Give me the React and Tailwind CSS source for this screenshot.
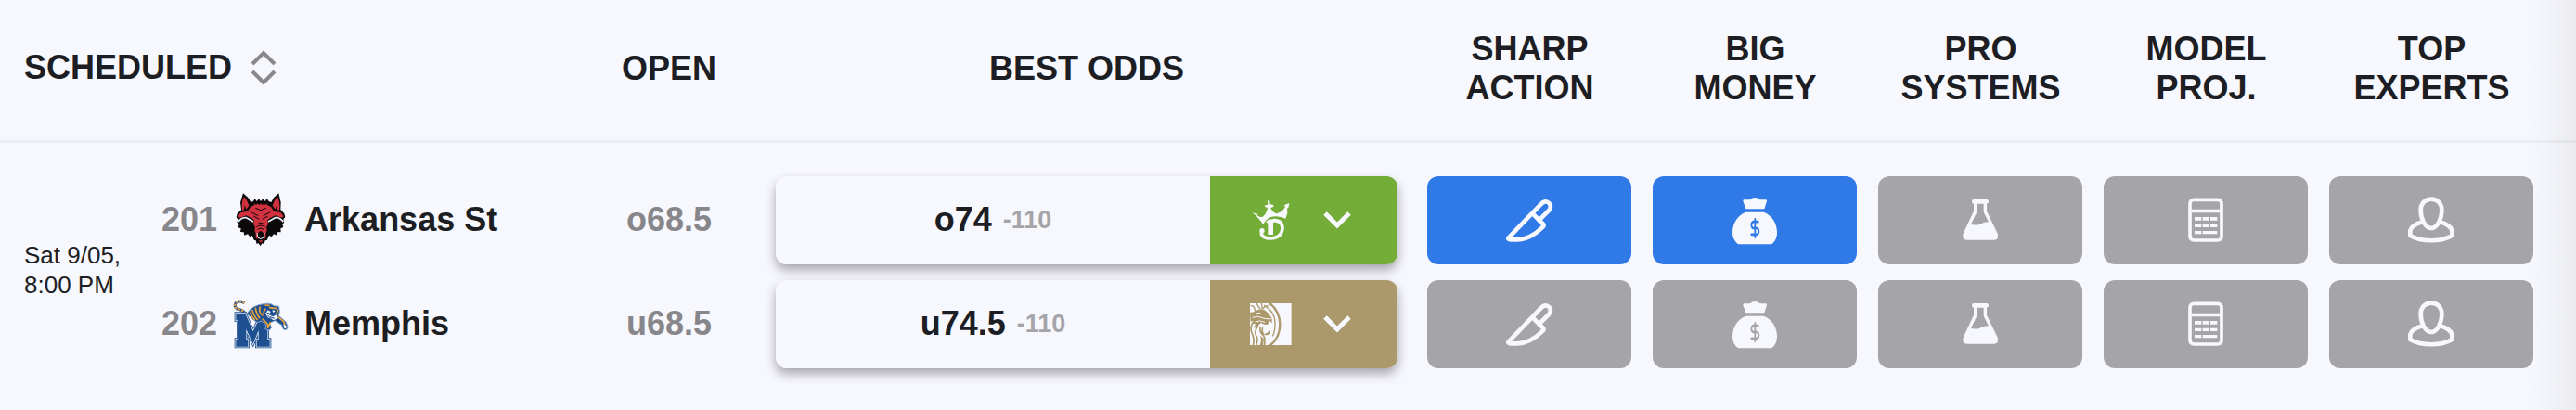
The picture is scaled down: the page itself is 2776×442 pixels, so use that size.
import React from "react";
import { DollarSign } from "lucide-react";

const games = [
  {
    id: 1,
    date: "Sat 9/05,",
    time: "8:00 PM",
    sides: [
      {
        rotation: 201,
        team: "Arkansas St",
        Logo: ArkansasStLogo,
        open: "o68.5",
        best: "o74",
        juice: "-110",
        book: "DraftKings",
        signals: ["sharp", "money"],
      },
      {
        rotation: 202,
        team: "Memphis",
        Logo: MemphisLogo,
        open: "u68.5",
        best: "u74.5",
        juice: "-110",
        book: "BetMGM",
        signals: [],
      },
    ],
  },
];

const books = {
  DraftKings: { Logo: DraftKingsLogo, color: "bg-[#73ac36]" },
  BetMGM: { Logo: BetMGMLogo, color: "bg-[#ab986b]" },
};

const signalColumns = [
  { key: "sharp", lines: ["SHARP", "ACTION"], Icon: KnifeIcon },
  { key: "money", lines: ["BIG", "MONEY"], Icon: MoneyBagIcon },
  { key: "systems", lines: ["PRO", "SYSTEMS"], Icon: FlaskIcon },
  { key: "model", lines: ["MODEL", "PROJ."], Icon: CalculatorIcon },
  { key: "experts", lines: ["TOP", "EXPERTS"], Icon: PersonIcon },
];

function ArkansasStLogo() {
  return (
    <svg viewBox="33 36 180 180" className="size-[60px] shrink-0" aria-hidden="true">
      <path
        fill="#0b0909"
        d="M66 40 82 54 91 69 99 66 104 57 110 66 117 58 123 66 130 58 137 66 143 57 149 66 157 69 165 54 181 40 188 70 187 93 199 106 202 118 196 124 199 134 193 140 196 150 187 154 188 166 178 165 176 176 165 172 158 181 150 176 143 192 137 193 134 204 127 202 122 211 116 202 110 204 107 193 101 191 95 176 88 181 81 172 70 176 68 166 57 165 59 154 49 151 53 140 46 134 50 125 44 118 47 106 60 94 57 70Z"
      />
      <g fill="#d2323f">
        <path d="M69 51Q80 62 85 80L76 92 71 78 69 94 63 96Q59 72 69 51ZM177 51Q166 62 161 80L170 92 175 78 177 94 183 96Q187 72 177 51Z" />
        <path d="M90 84 103 78 103 73 108 78 113 73 118 79 123 73 128 79 133 73 138 78 143 73 143 78 156 84 165 98 188 103 197 115 190 119 170 112 152 121 144 128 147 139 141 150 143 160 139 170 139 184 134 190 134 170 123 161 112 170 112 190 107 184 107 170 103 160 105 150 99 139 102 128 94 121 76 112 56 119 49 115 58 103 81 98Z" />
      </g>
      <g fill="none" stroke="#0b0909" strokeWidth="3">
        <path d="M92 101 115 113M154 101 131 113M106 88 123 95 140 88M100 114 118 124M146 114 128 124" />
        <path d="M111 140Q123 131 135 140M109 149Q123 139 137 149M113 157Q123 149 133 157" />
      </g>
      <path fill="none" stroke="#e9eaf0" strokeWidth="5" d="M50 133Q60 118 76 119L99 132M196 133Q186 118 170 119L147 132" />
      <path fill="none" stroke="#e9eaf0" strokeWidth="3" d="M111 168 113 180M135 168 133 180M114 184Q123 191 132 184" />
      <path fill="#d2323f" d="M116 193H130L123 200Z" />
    </svg>
  );
}

function MemphisLogo() {
  return (
    <svg viewBox="33 373 180 180" className="size-[60px] shrink-0" aria-hidden="true">
      <path fill="none" stroke="#2a5591" strokeWidth="9" d="M70 397Q60 387 44 394Q34 404 46 415Q62 417 74 430" />
      <path fill="none" stroke="#eba53a" strokeWidth="6" strokeDasharray="7 4" d="M70 397Q60 387 44 394Q34 404 46 415Q62 417 74 430" />
      {["#1d4f91", "#dfe7f3", "#1d4f91"].map((color, i) => (
        <g key={i} fill={color} stroke={color} strokeWidth={[10, 5, 0][i]}>
          <path d="M43 430H73L98 488 122 438H145V514H152V537H110V514H116V484L98 528 76 480V514H82V537H43V514H50V452H43Z" />
        </g>
      ))}
      <path
        fill="#1d4f91"
        stroke="#8fa9cf"
        strokeWidth="3"
        d="M78 430Q98 401 133 399Q154 394 166 405L182 407 184 424 181 437 205 458 211 474 205 483 196 481 190 467 169 453 152 461 158 475 151 484 137 480 141 468 126 454 111 459 96 448Z"
      />
      <g fill="none" stroke="#eba53a" strokeWidth="5">
        <path d="M88 426Q93 440 104 451M96 418Q98 435 113 451M106 411Q107 427 120 446M121 407Q114 425 130 437" />
        <path d="M136 403 152 404M150 411 174 414M138 414 131 429M179 417 174 431M128 447 145 464 146 478M155 457 148 472M178 441 197 456 201 467" />
      </g>
      <path fill="#f4f6fa" d="M146 419 155 424 150 434 162 440 173 434 178 445 166 452 146 443 138 430ZM160 418 170 422 164 428ZM196 464 206 470 205 479 199 478Z" />
      <path fill="none" stroke="#1d4f91" strokeWidth="3" d="M142 427 153 431M158 430 171 426M153 441 168 446M145 436 158 448" />
    </svg>
  );
}

function DraftKingsLogo() {
  return (
    <svg viewBox="171 105 135 135" className="size-[45px] shrink-0 text-[#f7f8fd]" aria-hidden="true">
      <path
        fill="currentColor"
        d="M178 148 196 152 194 157Q203 164 212 161Q224 153 228 132L219 129 220 123 229 123 228 108 235 110 236 121 247 123 247 129 238 132Q243 147 257 151Q275 147 285 129L281 124 298 117 296 130 291 134 292 149 286 167Q262 155 238 162Q221 169 214 187L205 174 189 156Z"
      />
      <path fill="none" stroke="currentColor" strokeWidth="11" d="M248 173Q276 173 276 199Q273 230 236 231Q209 230 207 212" />
      <circle cx="210" cy="206" r="8" fill="currentColor" />
      <path fill="currentColor" d="M222 178 230 171 252 167V178L246 180V219H229V182Z" />
    </svg>
  );
}

function BetMGMLogo() {
  return (
    <svg viewBox="171 442 135 135" className="size-[45px] shrink-0" aria-hidden="true">
      <path fill="#f7f8fd" d="M171 442H305V577H171Z" />
      <g fill="none" stroke="#ab986b">
        <path strokeWidth="7" d="M233 440Q268 468 268 510Q268 555 233 580" />
        <path strokeWidth="4" d="M216 448Q252 468 252 508Q252 535 244 548M173 449Q188 450 187 468M208 441 211 460M192 441Q197 454 205 460M230 449Q218 450 213 460" />
        <path strokeWidth="5" d="M197 515Q182 535 193 550Q197 562 191 578M180 503Q169 523 178 540Q187 558 181 578M204 518Q201 535 214 545Q222 556 217 578M212 521Q208 533 215 544" />
      </g>
      <path
        fill="#ab986b"
        d="M171 471Q182 473 191 466Q203 458 217 463L231 474 241 489 243 506 234 498 228 511 216 510 206 505 196 516 183 523 189 508 177 509 182 499 173 501ZM213 542Q225 541 236 528L237 540Q225 549 213 542ZM204 546 216 557 213 577H203Q210 560 204 546Z"
      />
      <path fill="none" stroke="#f7f8fd" strokeWidth="3" d="M179 488Q197 481 211 489Q225 494 239 492M188 502 203 499 219 503M190 475 204 473" />
    </svg>
  );
}

function KnifeIcon() {
  return (
    <svg viewBox="54 51 180 180" className="size-[60px]" fill="none" stroke="currentColor" strokeWidth="14" strokeLinejoin="round" aria-hidden="true">
      <path d="M77 199 181 91Q196 75 209 88Q217 99 207 111L176 142 190 156Q192 160 188 164Q148 204 105 205Q86 206 77 203Q74 201 77 199Z" />
      <path d="M155 121 178 144" />
    </svg>
  );
}

function MoneyBagIcon() {
  return (
    <svg viewBox="63 51 180 180" className="size-[60px]" fill="currentColor" aria-hidden="true">
      <path d="M119 76H138Q144 69 154 69Q164 69 170 76H188Q193 76 192 80L184 106H124L115 80Q115 76 119 76Z" />
      <path d="M124 116H182C208 126 225 151 225 182Q225 206 208 220H99Q81 205 81 182C81 151 98 126 124 116Z" />
      <DollarSign
        x="130"
        y="133"
        width="48"
        height="70"
        preserveAspectRatio="none"
        strokeWidth={2.8}
        className="text-[var(--tile)]"
      />
    </svg>
  );
}

function FlaskIcon() {
  return (
    <svg viewBox="30 30 180 180" className="size-[60px]" fill="currentColor" aria-hidden="true">
      <path
        fillRule="evenodd"
        d="M99 54H142Q147 54 147 61Q147 68 141 68V92L176 164Q181 185 164 185H77Q60 185 65 164L99 92V68Q93 68 93 61Q93 54 99 54ZM109 68V95L90 134Q106 139 119 134Q133 127 147 127L131 95V68Z"
      />
    </svg>
  );
}

function CalculatorIcon() {
  return (
    <svg viewBox="51 51 180 180" className="size-[60px]" aria-hidden="true">
      <rect x="90" y="76" width="102" height="131" rx="12" fill="none" stroke="currentColor" strokeWidth="11" />
      <path
        fill="currentColor"
        d="M90 107H192V118H90ZM105 132H127V143H105ZM131 132H153V143H131ZM156 132H178V143H156ZM105 155H127V165H105ZM131 155H153V165H131ZM156 155H178V165H156ZM105 177H127V187H105ZM131 177H178V187H131Z"
      />
    </svg>
  );
}

function PersonIcon() {
  return (
    <svg viewBox="783 51 180 180" className="size-[60px]" fill="none" stroke="currentColor" strokeWidth="14" strokeLinejoin="round" aria-hidden="true">
      <path d="M873 74C893 74 907 88 907 110C907 136 893 168 873 168C853 168 839 136 839 110C839 88 853 74 873 74Z" />
      <path d="M846 148C822 153 805 165 805 180V192C840 213 906 213 940 192V180C940 165 923 153 899 148" />
    </svg>
  );
}

function ChevronIcon() {
  return (
    <svg viewBox="0 0 30 20" className="h-5 w-[30px] shrink-0" fill="none" stroke="currentColor" strokeWidth="5" aria-hidden="true">
      <path d="M2 3 15 16 28 3" />
    </svg>
  );
}

function SortIcon() {
  return (
    <svg viewBox="0 0 28 40" className="h-10 w-7" fill="none" stroke="#88888d" strokeWidth="4" aria-hidden="true">
      <path d="M2 16 14 4 26 16M2 24 14 36 26 24" />
    </svg>
  );
}

const BestOdds = ({ side }) => {
  const { Logo, color } = books[side.book];
  return (
    <div className="flex h-[95px] overflow-hidden rounded-xl shadow-[0_6px_12px_rgba(30,25,40,0.38)]">
      <div className="flex flex-1 items-center justify-center gap-3 bg-[#f7f8fd]">
        <span>{side.best}</span>
        <span className="text-[27px] text-[#a5a4a9]">{side.juice}</span>
      </div>
      <button
        type="button"
        aria-label={`${side.book} odds`}
        className={`flex w-[202px] items-center gap-[34px] pl-[43px] text-[#f7f8fd] ${color}`}
      >
        <Logo />
        <ChevronIcon />
      </button>
    </div>
  );
};

const SignalTile = ({ Icon, label, active }) => (
  <button
    type="button"
    aria-label={label}
    className={`flex h-[95px] w-full items-center justify-center rounded-xl text-[#f7f8fd] ${
      active ? "bg-[#307ae8] [--tile:#307ae8]" : "bg-[#a5a4a9] [--tile:#a5a4a9]"
    }`}
  >
    <Icon />
  </button>
);

const App = () => (
  <main className="relative min-h-screen overflow-hidden bg-[#f7f8fd] font-['Liberation_Sans',Arial,sans-serif] text-[#1d1e23]">
    <table className="w-full table-fixed border-collapse text-[36px] leading-[42px] font-bold">
      <colgroup>
        <col className="w-[174px]" />
        <col className="w-[453px]" />
        <col className="w-[188px]" />
        <col className="w-[712px]" />
        {signalColumns.map((column) => (
          <col key={column.key} className="w-[243px]" />
        ))}
        <col className="w-[34px]" />
      </colgroup>
      <thead>
        <tr className="h-[152px] border-b-3 border-[#ecedf2]">
          <th colSpan={2} className="pb-1 pl-[26px] text-left">
            <button type="button" className="flex items-center gap-5">
              SCHEDULED
              <SortIcon />
            </button>
          </th>
          <th className="pb-0.5">OPEN</th>
          <th className="pb-0.5">BEST ODDS</th>
          {signalColumns.map((column) => (
            <th key={column.key} className="pb-0.5">
              {column.lines[0]}
              <br />
              {column.lines[1]}
            </th>
          ))}
          <td></td>
        </tr>
      </thead>
      <tbody>
        {games.map((game) => (
          <tr key={game.id} className="text-center">
            <td className="pt-9 pb-1 pl-[26px] text-left text-[26px] leading-8 font-normal">
              {game.date}
              <br />
              {game.time}
            </td>
            <td className="pt-9">
              <div className="flex flex-col gap-[17px]">
                {game.sides.map(({ rotation, team, Logo }) => (
                  <div key={rotation} className="flex h-[95px] items-center gap-[17px]">
                    <span className="text-[#87868b]">{rotation}</span>
                    <Logo />
                    <span>{team}</span>
                  </div>
                ))}
              </div>
            </td>
            <td className="pt-9 text-[#87868b]">
              <div className="flex flex-col gap-[17px]">
                {game.sides.map((side) => (
                  <div key={side.rotation} className="flex h-[95px] items-center justify-center">
                    {side.open}
                  </div>
                ))}
              </div>
            </td>
            <td className="px-[21px] pt-9">
              <div className="flex flex-col gap-[17px]">
                {game.sides.map((side) => (
                  <BestOdds key={side.rotation} side={side} />
                ))}
              </div>
            </td>
            {signalColumns.map(({ key, lines, Icon }) => (
              <td key={key} className="pt-9 pr-3 pl-[11px]">
                <div className="flex flex-col gap-[17px]">
                  {game.sides.map((side) => (
                    <SignalTile
                      key={side.rotation}
                      Icon={Icon}
                      label={`${lines.join(" ")} ${side.team}`}
                      active={side.signals.includes(key)}
                    />
                  ))}
                </div>
              </td>
            ))}
            <td></td>
          </tr>
        ))}
      </tbody>
    </table>

    {/* Scroll shadow on the right edge */}
    <div className="pointer-events-none absolute inset-y-0 right-0 w-[50px] bg-linear-to-r from-transparent to-black/5"></div>
  </main>
);

export default App;
